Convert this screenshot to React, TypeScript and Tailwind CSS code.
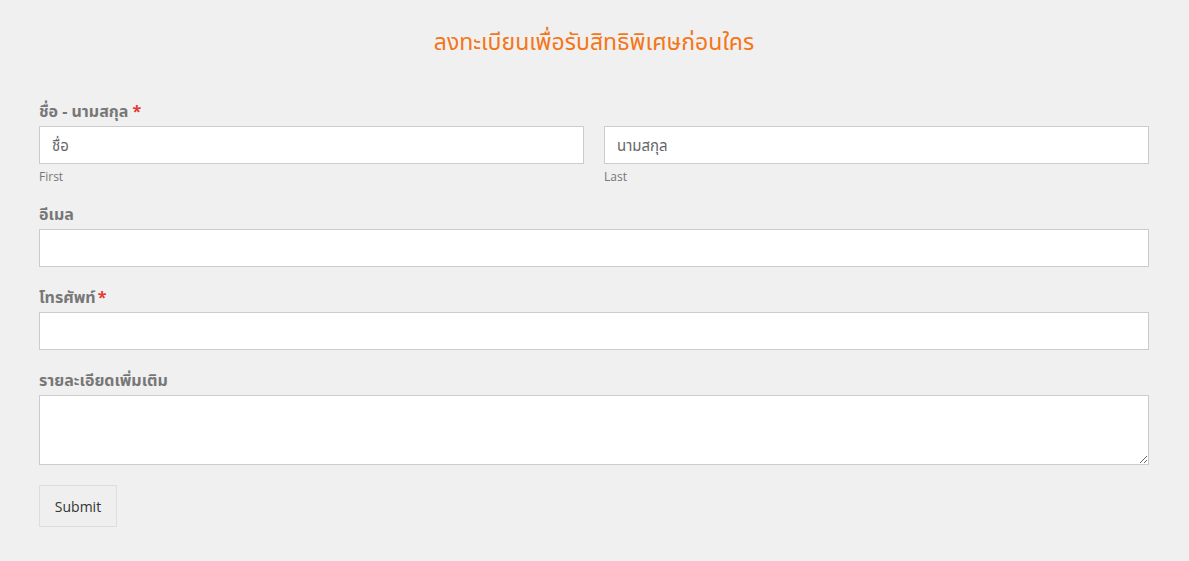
import React from 'react';

const font = {
  fontFamily: '"Open Sans", "Noto Sans", "Noto Sans Thai", Tahoma, sans-serif',
};

const Label = ({ text, required, tight }: { text: string; required?: boolean; tight?: boolean }) => (
  <label className="block text-[16px] font-bold leading-[20px] text-[#777]">
    {text}
    {required && <span className={tight ? 'ml-[2px] text-[#e53935]' : 'ml-1 text-[#e53935]'}>*</span>}
  </label>
);

const inputCls =
  'block w-full h-[38px] border border-[#ccc] bg-white px-[12px] text-[15px] text-[#666] placeholder:text-[#666] outline-none';

export default function App() {
  return (
    <div className="min-h-[561px] w-full bg-[#f0f0f0]" style={font}>
      <div className="pl-[39px] pr-[40px] pt-[26px]">
        <h2
          className="text-center text-[23px] leading-[30px] text-[#f47619]"
          style={{ fontFamily: '"Noto Sans", "Noto Sans Thai", sans-serif' }}
        >
          ลงทะเบียนเพื่อรับสิทธิพิเศษก่อนใคร
        </h2>

        <form className="mt-[45px] flex flex-col">
          <div className="flex flex-col gap-[5px]">
            <Label text="ชื่อ - นามสกุล" required />
            <div className="grid grid-cols-2 gap-[20px]">
              <div>
                <input className={inputCls} placeholder="ชื่อ" />
                <div className="mt-[4px] text-[12px] leading-[17px] text-[#777]">First</div>
              </div>
              <div>
                <input className={inputCls} placeholder="นามสกุล" />
                <div className="mt-[4px] text-[12px] leading-[17px] text-[#777]">Last</div>
              </div>
            </div>
          </div>

          <div className="mt-[19px] flex flex-col gap-[5px]">
            <Label text="อีเมล" />
            <input className={inputCls} />
          </div>

          <div className="mt-[20px] flex flex-col gap-[5px]">
            <Label text="โทรศัพท์" required tight />
            <input className={inputCls} />
          </div>

          <div className="mt-[20px] flex flex-col gap-[5px]">
            <Label text="รายละเอียดเพิ่มเติม" />
            <textarea className="block h-[70px] w-full border border-[#ccc] bg-white px-[12px] py-[8px] text-[15px] outline-none" />
          </div>

          <div className="mt-[20px]">
            <button
              type="button"
              className="h-[42px] w-[78px] border border-[#ddd] bg-[#efefef] text-[14px] text-[#333]"
            >
              Submit
            </button>
          </div>
        </form>
      </div>
    </div>
  );
}
